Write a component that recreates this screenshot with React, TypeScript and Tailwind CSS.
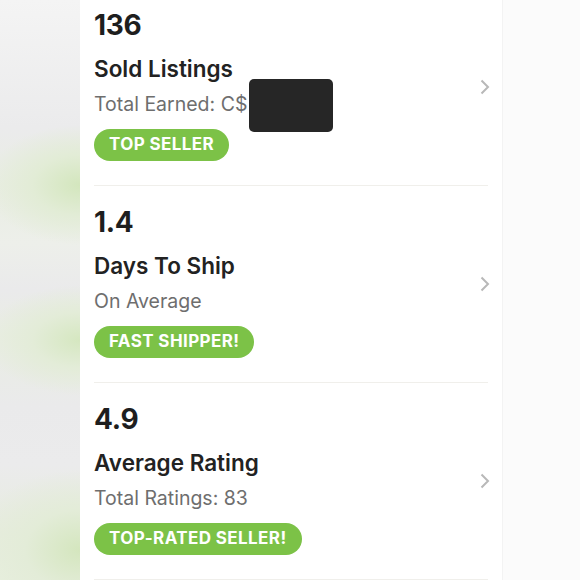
const stats = [
  { value: "136", title: "Sold Listings", sub: "Total Earned: C$", badge: "TOP SELLER", first: true },
  { value: "1.4", title: "Days To Ship", sub: "On Average", badge: "FAST SHIPPER!" },
  { value: "4.9", title: "Average Rating", sub: "Total Ratings: 83", badge: "TOP-RATED SELLER!" },
]

function Chevron() {
  return (
    <svg width="10" height="16" viewBox="0 0 10 16" className="shrink-0 -mr-[2px]">
      <polyline points="1.5,1.5 8,8 1.5,14.5" fill="none" stroke="#b8b8b8" strokeWidth="2" />
    </svg>
  )
}

function StatRow({ value, title, sub, badge, first }: { value: string; title: string; sub: string; badge: string; first?: boolean }) {
  return (
    <div className={`flex items-center border-b border-[#f0efeb] ${first ? "-mt-[11px]" : ""}`}>
      <div className="flex-1 flex flex-col items-start pt-[18px] pb-[24px] relative">
        <div className="text-[28px] leading-[36px] font-bold text-[#1e1e1e] tracking-[-0.3px]">{value}</div>
        <div className="mt-[12px] text-[22.5px] leading-[28px] font-semibold text-[#222]">{title}</div>
        <div className="mt-[9px] text-[19.5px] leading-[24px] text-[#6e6e6e]">{sub}</div>
        <div className="mt-[13px] h-[32px] px-[15px] rounded-full bg-[#7cc247] flex items-center text-white text-[17px] font-bold tracking-[0.4px]">
          {badge}
        </div>
        {first && (
          <div className="absolute left-[155px] top-[90px] w-[84px] h-[53px] rounded-[5px] bg-[#262626]" />
        )}
      </div>
      <Chevron />
    </div>
  )
}

export default function App() {
  return (
    <div className="w-[580px] h-[580px] overflow-hidden flex bg-[#fbfbfb]" style={{ fontFamily: "Inter, 'Noto Sans', sans-serif" }}>
      <div className="w-[80px] h-full bg-[radial-gradient(ellipse_95px_60px_at_100%_185px,#d3e6bd,#e2ecd6_50%,transparent),radial-gradient(ellipse_95px_55px_at_100%_340px,#d5e7c0,#e3ecd8_50%,transparent),radial-gradient(ellipse_110px_80px_at_100%_550px,#d4e6be,#e3ecd8_50%,transparent),linear-gradient(to_bottom,#f4f4f4_0%,#ebebec_22%,#e9ede3_32%,#edefea_42%,#eaeaeb_50%,#e9ede3_58%,#eaeaeb_70%,#ebebec_80%,#e7ecdf_92%,#e8efdf_100%)]" />
      <div className="w-[422px] h-full bg-white overflow-hidden">
        <div className="px-[14px]">
          {stats.map((s) => (
            <StatRow key={s.value} {...s} />
          ))}
        </div>
      </div>
      <div className="flex-1 h-full bg-[#fbfbfb] border-l border-[#f3f3f3]" />
    </div>
  )
}
